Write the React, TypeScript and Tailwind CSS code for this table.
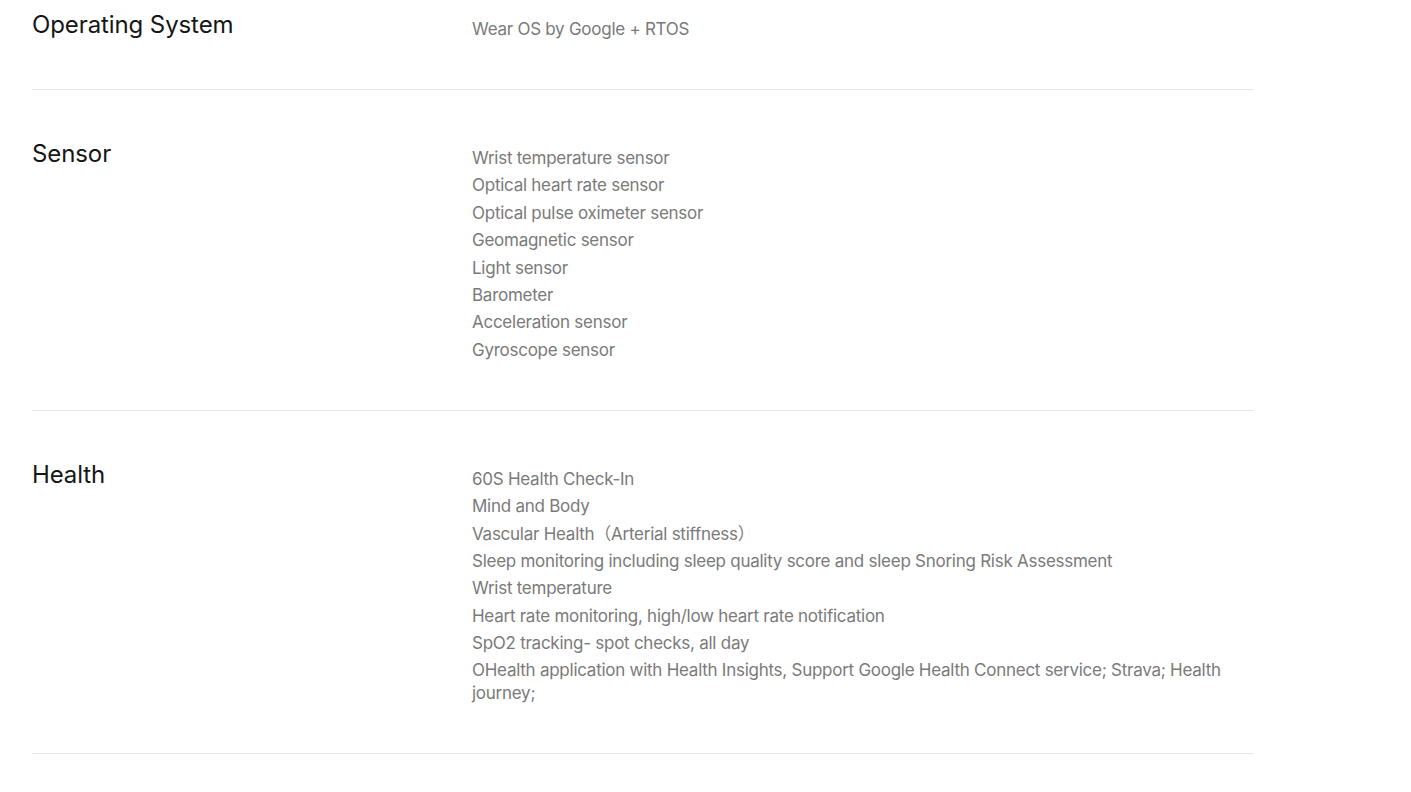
const specs = [
  {
    title: 'Operating System',
    items: ['Wear OS by Google + RTOS'],
  },
  {
    title: 'Sensor',
    items: [
      'Wrist temperature sensor',
      'Optical heart rate sensor',
      'Optical pulse oximeter sensor',
      'Geomagnetic sensor',
      'Light sensor',
      'Barometer',
      'Acceleration sensor',
      'Gyroscope sensor',
    ],
  },
  {
    title: 'Health',
    items: [
      '60S Health Check-In',
      'Mind and Body',
      'Vascular Health（Arterial stiffness）',
      'Sleep monitoring including sleep quality score and sleep Snoring Risk Assessment',
      'Wrist temperature',
      'Heart rate monitoring, high/low heart rate notification',
      'SpO2 tracking- spot checks, all day',
      'OHealth application with Health Insights, Support Google Health Connect service; Strava; Health journey;',
    ],
  },
];

export default function App() {
  return (
    <div className="min-h-screen bg-white pl-8 font-['Inter','Noto_Sans_CJK_SC',sans-serif]">
      <div className="w-[1221px]">
        {specs.map((spec, idx) => (
          <div
            key={spec.title}
            className={`flex border-b border-[#e6e6e6] pb-12 ${idx === 0 ? 'pt-[9px]' : 'pt-12'}`}
          >
            <h3 className="w-[440px] shrink-0 text-[24px] leading-8 font-normal tracking-[-0.1px] text-[#161616]">
              {spec.title}
            </h3>
            <div className="flex flex-1 flex-col gap-[4.4px] pt-[9px]">
              {spec.items.map((item) => (
                <p
                  key={item}
                  className="text-[17px] leading-[23px] tracking-[-0.26px] text-[#7a7a7a]"
                >
                  {item}
                </p>
              ))}
            </div>
          </div>
        ))}
      </div>
    </div>
  );
}
